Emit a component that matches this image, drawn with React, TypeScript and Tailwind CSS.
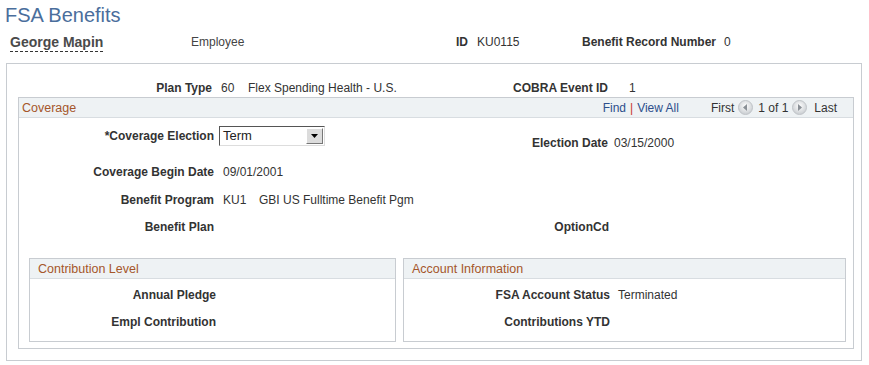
import React from 'react';

const LABEL = 'font-bold text-[#333] text-right shrink-0';

interface FieldProps {
  label: string;
  labelWidth: string;
  children?: React.ReactNode;
  gap?: string;
}

const Field: React.FC<FieldProps> = ({ label, labelWidth, children, gap = 'ml-[8px]' }) => (
  <div className="flex items-center">
    <span className={`${LABEL} ${labelWidth}`}>{label}</span>
    {children && <span className={`${gap} text-[#333]`}>{children}</span>}
  </div>
);

const NavArrow: React.FC<{ dir: 'left' | 'right' }> = ({ dir }) => (
  <svg width="15" height="15" viewBox="0 0 15 15" className="inline-block">
    <defs>
      <radialGradient id={`g-${dir}`} cx="50%" cy="40%" r="60%">
        <stop offset="0%" stopColor="#ffffff" />
        <stop offset="100%" stopColor="#c8ccd0" />
      </radialGradient>
    </defs>
    <circle cx="7.5" cy="7.5" r="7" fill={`url(#g-${dir})`} stroke="#c0c4c8" />
    {dir === 'left' ? (
      <polygon points="9,4 5,7.5 9,11" fill="#8a9096" />
    ) : (
      <polygon points="6,4 10,7.5 6,11" fill="#8a9096" />
    )}
  </svg>
);

const SectionHeader: React.FC<{ title: string; pad?: string; children?: React.ReactNode }> = ({
  title,
  pad = 'pl-[3px]',
  children
}) => (
  <div className={`flex items-center h-[20px] bg-[#eef2f4] border-b border-[#d8dde1] ${pad}`}>
    <span className="text-[#a5562a] text-[12.5px]">{title}</span>
    {children}
  </div>
);

export default function App() {
  return (
    <div
      className="w-[869px] h-[365px] bg-white text-[12px] leading-[14px] text-[#333] overflow-hidden"
      style={{ fontFamily: '"Liberation Sans", Arial, sans-serif' }}
    >
      {/* Title */}
      <div className="pl-[5px] pt-[4px] text-[20px] leading-[22px] text-[#4a6e9c]">FSA Benefits</div>

      {/* Employee header */}
      <div className="flex items-center mt-[7px] h-[18px]">
        <span className="ml-[10px] w-[181px] shrink-0">
          <span className="font-bold text-[14px] text-[#4a4a4a] border-b border-dashed border-[#333] pb-[1px]">
            George Mapin
          </span>
        </span>
        <span className="w-[265px] shrink-0 text-[#444]">Employee</span>
        <span className="font-bold w-[21px] shrink-0">ID</span>
        <span className="w-[105px] shrink-0">KU0115</span>
        <span className="font-bold">Benefit Record Number</span>
        <span className="ml-[8px]">0</span>
      </div>

      {/* Outer box */}
      <div className="ml-[6px] mt-[12px] w-[856px] h-[298px] border border-[#c8ccd1]">
        <div className="flex items-center h-[20px] mt-[14px]">
          <div className="w-[401px] flex items-center">
            <span className={`${LABEL} w-[205px]`}>Plan Type</span>
            <span className="ml-[9px] w-[27px]">60</span>
            <span>Flex Spending Health - U.S.</span>
          </div>
          <span className={`${LABEL} w-[200px]`}>COBRA Event ID</span>
          <span className="ml-[21px]">1</span>
        </div>

        {/* Coverage box */}
        <div className="ml-[11px] mt-[-1px] w-[836px] h-[252px] border border-[#c8ccd1]">
          <SectionHeader title="Coverage">
            <div className="ml-auto flex items-center text-[12px] mr-[16px]">
              <span className="text-[#2d4f8c]">Find</span>
              <span className="mx-[4px] text-[#c8362e]">|</span>
              <span className="text-[#2d4f8c]">View All</span>
              <span className="ml-[32px] text-[#333]">First</span>
              <span className="ml-[4px] mr-[5px] flex"><NavArrow dir="left" /></span>
              <span>1 of 1</span>
              <span className="ml-[4px] mr-[7px] flex"><NavArrow dir="right" /></span>
              <span>Last</span>
            </div>
          </SectionHeader>

          <div className="flex mt-[8px]">
            <div className="w-[400px] flex items-center h-[20px]">
              <span className={`${LABEL} w-[195px]`}>*Coverage Election</span>
              <div className="ml-[5px] w-[106px] h-[20px] flex items-stretch border border-t-[#555] border-l-[#555] border-r-[#ddd] border-b-[#ddd] bg-white">
                <span className="flex-1 pl-[3px] flex items-center text-[13px] text-[#222]">Term</span>
                <span className="w-[17px] m-[1px] flex items-center justify-center bg-[#dcdcdc] border border-t-white border-l-white border-r-[#777] border-b-[#777]">
                  <svg width="7" height="4" viewBox="0 0 7 4">
                    <polygon points="0,0 7,0 3.5,4" fill="#000" />
                  </svg>
                </span>
              </div>
            </div>
            <div className="mt-[10px] flex items-center">
              <span className={`${LABEL} w-[189px]`}>Election Date</span>
              <span className="ml-[6px]">03/15/2000</span>
            </div>
          </div>

          <div className="flex flex-col gap-[13.5px] mt-[15px]">
            <Field label="Coverage Begin Date" labelWidth="w-[195px]" gap="ml-[9px]">09/01/2001</Field>
            <Field label="Benefit Program" labelWidth="w-[195px]" gap="ml-[9px]">
              <span className="inline-block w-[36px]">KU1</span>GBI US Fulltime Benefit Pgm
            </Field>
            <div className="flex items-center">
              <span className={`${LABEL} w-[195px]`}>Benefit Plan</span>
              <span className={`${LABEL} w-[395px]`}>OptionCd</span>
            </div>
          </div>

          {/* Sub boxes */}
          <div className="flex mt-[24px] ml-[10px] gap-[7px]">
            <div className="w-[367px] h-[84px] border border-[#c8ccd1]">
              <SectionHeader title="Contribution Level" pad="pl-[8px]" />
              <div className="flex flex-col gap-[13px] mt-[9px]">
                <Field label="Annual Pledge" labelWidth="w-[186px]" />
                <Field label="Empl Contribution" labelWidth="w-[186px]" />
              </div>
            </div>
            <div className="w-[443px] h-[84px] border border-[#c8ccd1]">
              <SectionHeader title="Account Information" pad="pl-[8px]" />
              <div className="flex flex-col gap-[13px] mt-[9px]">
                <Field label="FSA Account Status" labelWidth="w-[206px]" gap="ml-[8px]">Terminated</Field>
                <Field label="Contributions YTD" labelWidth="w-[206px]" />
              </div>
            </div>
          </div>
        </div>
      </div>
    </div>
  );
}
